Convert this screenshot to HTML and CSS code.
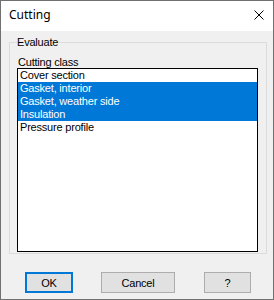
FILE: index.html
```html
<!DOCTYPE html>
<html lang="en">
<head>
  <meta charset="UTF-8" />
  <title>Cutting</title>
  <link rel="stylesheet" href="styles.css">
</head>
<body>

<div class="window">
  <!-- Title bar -->
  <div class="titlebar">
    <span class="title">Cutting</span>
    <svg class="close" width="10" height="10" viewBox="0 0 10 10" xmlns="http://www.w3.org/2000/svg">
      <line x1="0.5" y1="0.5" x2="9.5" y2="9.5" stroke="#000" stroke-width="1"/>
      <line x1="9.5" y1="0.5" x2="0.5" y2="9.5" stroke="#000" stroke-width="1"/>
    </svg>
  </div>

  <div class="content">
    <fieldset class="group">
      <legend>Evaluate</legend>
      <div class="label">Cutting class</div>
      <div class="listbox">
        <div class="item">Cover section</div>
        <div class="item selected">Gasket, interior</div>
        <div class="item selected">Gasket, weather side</div>
        <div class="item selected">Insulation</div>
        <div class="item">Pressure profile</div>
      </div>
    </fieldset>

    <div class="buttons">
      <button class="btn btn-ok">OK</button>
      <button class="btn btn-cancel">Cancel</button>
      <button class="btn btn-help">?</button>
    </div>
  </div>
</div>

</body>
</html>
```

FILE: styles.css
```css
body {
  margin: 0;
  font-family: "Liberation Sans", Arial, sans-serif;
  font-size: 11px;
  letter-spacing: -0.2px;
  color: #000;
  background: #f0f0f0;
}

.window {
  width: 274px;
  height: 300px;
  box-sizing: border-box;
  border: 1px solid #707070;
  display: flex;
  flex-direction: column;
  background: #f0f0f0;
}

.titlebar {
  height: 30px;
  flex: none;
  background: #fff;
  display: flex;
  justify-content: space-between;
  align-items: flex-start;
  padding: 0 9px 0 8px;
}

.title {
  font-family: "Noto Sans", "Segoe UI", sans-serif;
  font-size: 12px;
  letter-spacing: 0;
  line-height: 16px;
  margin-top: 6px;
}

.close {
  display: block;
  margin-top: 9px;
}

.content {
  flex: 1;
  display: flex;
  flex-direction: column;
}

.group {
  margin: 5px 6px 0 8px;
  padding: 8px 8px 1px 7px;
  border: 1px solid #dcdcdc;
  min-width: 0;
}

.group legend {
  padding: 0 1px 0 0;
  line-height: 12px;
}

.label {
  line-height: 12px;
  padding-left: 1px;
}

.listbox {
  height: 184px;
  box-sizing: border-box;
  border: 1px solid #000;
  background: #fff;
}

.item {
  height: 13px;
  line-height: 13px;
  padding-left: 2px;
  white-space: nowrap;
}

.item.selected {
  background: #0078d7;
  color: #fff;
}

.buttons {
  display: flex;
  margin-top: 18px;
  padding-left: 24px;
}

.btn {
  height: 21px;
  box-sizing: border-box;
  padding: 0;
  font-family: "Liberation Sans", Arial, sans-serif;
  font-size: 11px;
  letter-spacing: -0.2px;
  color: #000;
  background: #e1e1e1;
  border: 1px solid #adadad;
  border-radius: 0;
}

.btn-ok {
  width: 48px;
  border: 2px solid #0078d7;
}

.btn-cancel {
  width: 74px;
  margin-left: 28px;
}

.btn-help {
  width: 47px;
  margin-left: 29px;
}
```
